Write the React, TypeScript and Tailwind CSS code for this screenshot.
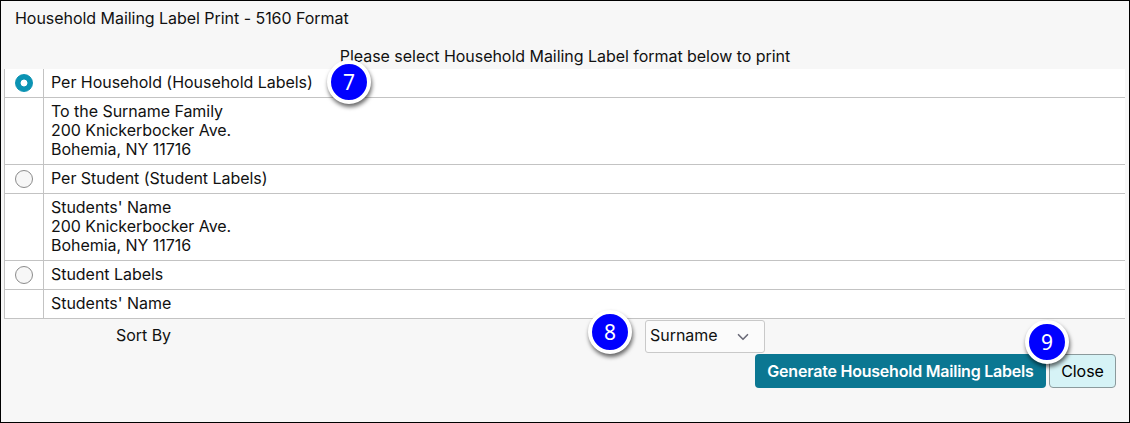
import { ChevronDown } from "lucide-react";
import { ReactNode, useState } from "react";

interface LabelFormat {
  id: string;
  title: string;
  preview: string[];
  step?: number;
}

const formats: LabelFormat[] = [
  {
    id: "household",
    title: "Per Household (Household Labels)",
    preview: ["To the Surname Family", "200 Knickerbocker Ave.", "Bohemia, NY 11716"],
    step: 7,
  },
  {
    id: "student",
    title: "Per Student (Student Labels)",
    preview: ["Students' Name", "200 Knickerbocker Ave.", "Bohemia, NY 11716"],
  },
  {
    id: "labels",
    title: "Student Labels",
    preview: ["Students' Name"],
  },
];

const StepBadge = ({ step, className }: { step: number; className: string }) => (
  <span
    className={`absolute z-10 flex h-11 w-11 items-center justify-center rounded-full border-4 border-white bg-[#0000ff] font-['Noto_Sans',sans-serif] text-[21px] leading-none font-normal tracking-normal text-white shadow-[1px_3px_4px_rgba(0,0,0,0.6)] ${className}`}
  >
    {step}
  </span>
);

const Row = ({ left, children }: { left?: ReactNode; children: ReactNode }) => (
  <div className="flex border-b border-l border-[#c3c3c3] bg-white">
    <div className="flex w-[39px] shrink-0 items-center justify-center border-r border-[#c3c3c3]">
      {left}
    </div>
    <div className="pt-1 pb-[5px] pl-[7px]">{children}</div>
  </div>
);

const App = () => {
  const [selected, setSelected] = useState("household");

  return (
    <div className="flex h-[423px] w-[1130px] flex-col border border-black bg-[#f7f7f7] font-['Inter',sans-serif] text-[16px] leading-[19px] tracking-[-0.04px] text-[#111]">
      <h1 className="pt-2 pl-[14px]">Household Mailing Label Print - 5160 Format</h1>
      <p className="mt-[19px] text-center">Please select Household Mailing Label format below to print</p>

      <div className="mt-[3px] mr-1 ml-[3px]">
        {formats.map((format) => (
          <div key={format.id}>
            <Row
              left={
                <input
                  type="radio"
                  name="format"
                  aria-label={format.title}
                  checked={selected === format.id}
                  onChange={() => setSelected(format.id)}
                  className="h-[18px] w-[18px] appearance-none rounded-full border border-[#8b8b8b] bg-[#f7f7f7] checked:border-[#0b93b3] checked:bg-[radial-gradient(circle,#fff_3px,#0b93b3_3.8px)]"
                />
              }
            >
              <span className="relative block">
                {format.title}
                {format.step && <StepBadge step={format.step} className="-top-[13px] left-[276px]" />}
              </span>
            </Row>
            <Row>
              {format.preview.map((line) => (
                <div key={line}>{line}</div>
              ))}
            </Row>
          </div>
        ))}
      </div>

      <div className="mt-px flex h-[33px] items-center">
        <span className="w-[643px] pb-0.5 pl-[115px]">Sort By</span>
        <div className="relative">
          <StepBadge step={8} className="-top-[10px] -left-14" />
          <button className="ml-px flex h-[33px] w-[120px] items-center justify-between rounded-[3px] border border-[#c9c9c9] bg-[#fbfbfb] pr-3 pb-0.5 pl-1">
            Surname
            <ChevronDown className="mt-0.5 h-[18px] w-[18px] text-[#6b6b78]" strokeWidth={2.2} />
          </button>
        </div>
      </div>

      <div className="mt-px mr-[13px] flex justify-end gap-[3px]">
        <button className="relative h-[34px] w-[291px] rounded bg-[#0b7792] font-semibold tracking-[-0.22px] text-white">
          Generate Household Mailing Labels
          <StepBadge step={9} className="-top-[34px] left-[270px]" />
        </button>
        <button className="h-[34px] w-[67px] rounded border border-[#8b9a9c] bg-[#d6f3f6] text-black">Close</button>
      </div>
    </div>
  );
};

export default App;
